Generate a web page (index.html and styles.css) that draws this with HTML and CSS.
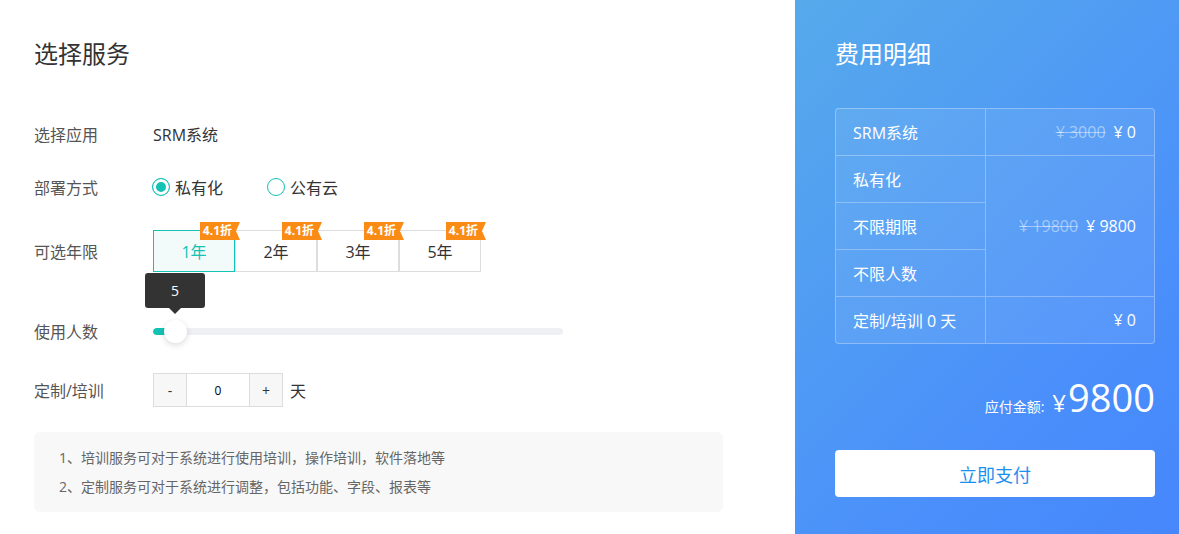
FILE: index.html
```html
<!DOCTYPE html>
<html lang="zh">
<head>
<meta charset="utf-8">
<title>选择服务</title>
<link rel="stylesheet" href="styles.css">
</head>
<body>
<div class="page">
  <section class="service">
    <h1 class="title">选择服务</h1>

    <div class="row row-app">
      <span class="label">选择应用</span>
      <span class="value">SRM系统</span>
    </div>

    <div class="row row-deploy">
      <span class="label">部署方式</span>
      <div class="radios">
        <label class="radio checked"><span class="dot"></span>私有化</label>
        <label class="radio"><span class="dot"></span>公有云</label>
      </div>
    </div>

    <div class="row row-years">
      <span class="label">可选年限</span>
      <div class="years">
        <div class="year active"><span class="badge">4.1折</span>1年</div>
        <div class="year"><span class="badge">4.1折</span>2年</div>
        <div class="year"><span class="badge">4.1折</span>3年</div>
        <div class="year"><span class="badge">4.1折</span>5年</div>
      </div>
    </div>

    <div class="row row-users">
      <span class="label">使用人数</span>
      <div class="slider">
        <div class="track"><div class="fill" style="width:22px"></div></div>
        <div class="handle" style="left:22px"><div class="tip">5</div></div>
      </div>
    </div>

    <div class="row row-custom">
      <span class="label">定制/培训</span>
      <div class="stepper">
        <span class="step">-</span>
        <span class="num">0</span>
        <span class="step">+</span>
      </div>
      <span class="unit">天</span>
    </div>

    <div class="note">
      <p>1、培训服务可对于系统进行使用培训，操作培训，软件落地等</p>
      <p>2、定制服务可对于系统进行调整，包括功能、字段、报表等</p>
    </div>
  </section>

  <aside class="bill">
    <h2 class="bill-title">费用明细</h2>
    <div class="bill-box">
      <table class="bill-table">
        <tr>
          <td class="name">SRM系统</td>
          <td class="price"><span class="old">¥ 3000</span>¥ 0</td>
        </tr>
        <tr>
          <td class="name">私有化</td>
          <td class="price" rowspan="3"><span class="old">¥ 19800</span>¥ 9800</td>
        </tr>
        <tr>
          <td class="name">不限期限</td>
        </tr>
        <tr>
          <td class="name">不限人数</td>
        </tr>
        <tr class="last">
          <td class="name">定制/培训 0 天</td>
          <td class="price">¥ 0</td>
        </tr>
      </table>
    </div>
    <div class="total">
      <span class="total-label">应付金额:</span>
      <span class="yen">¥</span>
      <span class="amount">9800</span>
    </div>
    <button class="pay" type="button">立即支付</button>
  </aside>
</div>
</body>
</html>
```

FILE: styles.css
```css
html, body {
  margin: 0;
  padding: 0;
}
body {
  font-family: "Open Sans", "Noto Sans CJK SC", sans-serif;
  background: #fff;
}
.page {
  display: flex;
  height: 534px;
  overflow: hidden;
}

/* left */
.service {
  width: 795px;
  flex: none;
  box-sizing: border-box;
  padding: 38px 0 0 34px;
  background: #fff;
}
.title {
  margin: 0 0 44px;
  font-size: 24px;
  font-weight: normal;
  line-height: 32px;
  color: #333;
}
.row {
  display: flex;
  align-items: center;
}
.label {
  width: 119px;
  flex: none;
  font-size: 16px;
  color: #555;
}
.value {
  font-size: 16px;
  color: #333;
}
.row-app { height: 40px; }
.row-deploy { height: 40px; margin-top: 13px; }
.row-years { height: 42px; margin-top: 23px; }
.row-users { height: 40px; margin-top: 39px; }
.row-custom { height: 34px; margin-top: 22px; }

.radios {
  display: flex;
  gap: 44px;
  margin-left: -1px;
}
.radio {
  display: flex;
  align-items: center;
  font-size: 16px;
  color: #333;
}
.dot {
  width: 18px;
  height: 18px;
  box-sizing: border-box;
  border: 1px solid #13c2b3;
  border-radius: 50%;
  margin-right: 5px;
  background: #fff;
}
.checked .dot {
  background: #13c2b3;
  box-shadow: inset 0 0 0 3px #fff;
}

.years {
  display: flex;
}
.year {
  position: relative;
  width: 82px;
  height: 42px;
  box-sizing: border-box;
  border: 1px solid #ddd;
  display: flex;
  align-items: center;
  justify-content: center;
  font-size: 16px;
  color: #333;
  background: #fff;
}
.year.active {
  border-color: #13c2b3;
  background: #f2fbfa;
  color: #13c2b3;
}
.badge {
  position: absolute;
  z-index: 2;
  top: -9px;
  right: -6px;
  height: 18px;
  padding: 0 8px 0 3px;
  background: #fa8c16;
  color: #fff;
  font-size: 12px;
  font-weight: bold;
  line-height: 18px;
  clip-path: polygon(0 0, 100% 0, calc(100% - 4px) 50%, 100% 100%, 0 100%);
}

.slider {
  position: relative;
  width: 410px;
  height: 7px;
}
.track {
  height: 7px;
  border-radius: 4px;
  background: #eef0f4;
  overflow: hidden;
}
.fill {
  height: 100%;
  background: #13c2b3;
  border-radius: 4px;
}
.handle {
  position: absolute;
  top: 50%;
  width: 23px;
  height: 23px;
  margin: -11.5px 0 0 -11.5px;
  border-radius: 50%;
  background: #fff;
  box-shadow: 0 2px 6px rgba(0, 0, 0, 0.15);
}
.tip {
  position: absolute;
  left: 50%;
  bottom: calc(100% + 12px);
  transform: translateX(-50%);
  width: 60px;
  height: 35px;
  border-radius: 3px;
  background: #333;
  color: #fff;
  font-size: 14px;
  display: flex;
  align-items: center;
  justify-content: center;
}
.tip::after {
  content: "";
  position: absolute;
  left: 50%;
  top: 100%;
  margin-left: -6px;
  border: 6px solid transparent;
  border-top-color: #333;
  border-bottom: 0;
}

.stepper {
  display: flex;
  height: 34px;
}
.step, .num {
  box-sizing: border-box;
  height: 34px;
  display: flex;
  align-items: center;
  justify-content: center;
  border: 1px solid #ddd;
  color: #333;
}
.step {
  width: 34px;
  background: #f7f7f7;
  font-size: 14px;
}
.num {
  width: 62px;
  border-left: 0;
  border-right: 0;
  background: #fff;
  font-size: 12px;
  color: #000;
}
.unit {
  margin-left: 7px;
  font-size: 16px;
  color: #333;
}

.note {
  margin-top: 25px;
  width: 689px;
  box-sizing: border-box;
  padding: 11px 25px;
  border-radius: 6px;
  background: #f8f8f8;
  font-size: 14px;
  line-height: 29px;
  color: #666;
}
.note p {
  margin: 0;
}

/* right */
.bill {
  flex: 1;
  box-sizing: border-box;
  padding: 38px 24px 0 40px;
  background: linear-gradient(135deg, #56aaeb 0%, #4a8ffb 70%, #4687fc 100%);
  color: #fff;
}
.bill-title {
  margin: 0 0 38px;
  font-size: 24px;
  font-weight: normal;
  line-height: 32px;
}
.bill-box {
  border: 1px solid rgba(255, 255, 255, 0.3);
  border-radius: 4px;
  background: rgba(255, 255, 255, 0.08);
  overflow: hidden;
}
.bill-table {
  width: 100%;
  border-collapse: separate;
  border-spacing: 0;
}
.bill-table td {
  height: 46px;
  padding: 0 18px 0 17px;
  border-bottom: 1px solid rgba(255, 255, 255, 0.3);
  font-size: 16px;
  white-space: nowrap;
}
.bill-table tr.last td {
  border-bottom: 0;
}
.bill-table .name {
  width: 114px;
  border-right: 1px solid rgba(255, 255, 255, 0.3);
}
.bill-table .price {
  text-align: right;
}
.old {
  color: rgba(255, 255, 255, 0.45);
  text-decoration: line-through;
  margin-right: 8px;
}
.total {
  display: flex;
  justify-content: flex-end;
  align-items: baseline;
  margin-top: 28px;
  height: 50px;
  line-height: 50px;
}
.total-label {
  font-size: 14px;
}
.yen {
  font-size: 24px;
  margin: 0 2px 0 8px;
}
.amount {
  font-size: 38px;
}
.pay {
  display: block;
  width: 100%;
  height: 47px;
  margin-top: 28px;
  border: 0;
  border-radius: 4px;
  background: #fff;
  color: #1a8ff2;
  font-family: inherit;
  font-size: 18px;
  cursor: pointer;
}
```
